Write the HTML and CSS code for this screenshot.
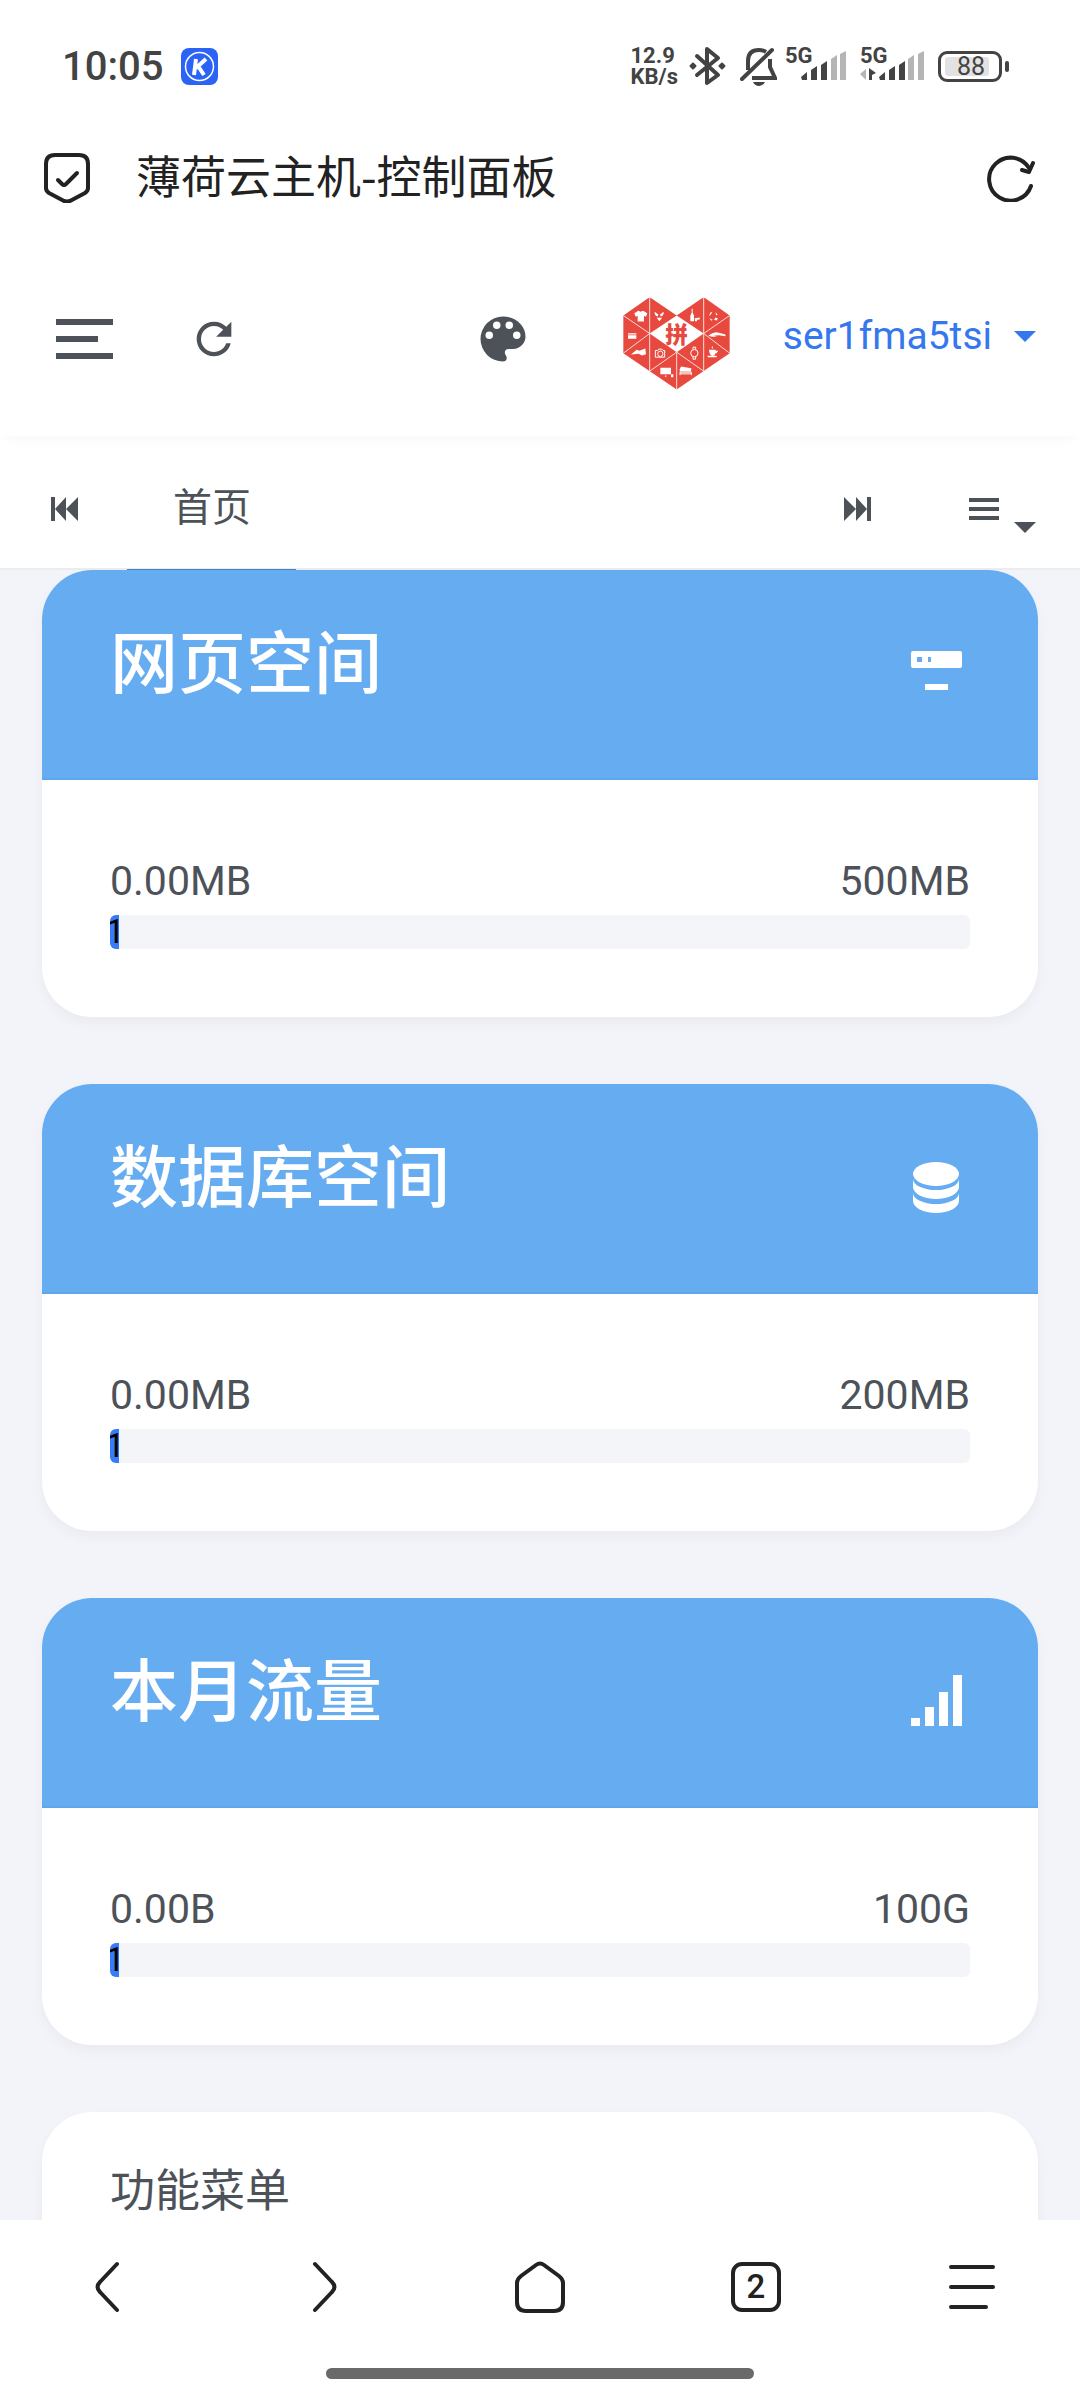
FILE: index.html
```html
<!DOCTYPE html>
<html lang="zh-CN">
<head>
    <meta charset="UTF-8">
    <meta name="viewport" content="width=device-width, initial-scale=1.0">
    <title>薄荷云主机-控制面板</title>
    <link rel="stylesheet" href="styles.css">
</head>
<body>
    <!-- Phone status bar -->
    <div class="status-bar">
        <span class="clock">10:05</span>
        <svg class="app-badge" width="37" height="37" viewBox="0 0 37 37">
            <rect width="37" height="37" rx="8" fill="#2a63f5"/>
            <circle cx="18.500" cy="18.500" r="14" fill="none" stroke="#fff" stroke-width="1.500"/>
            <path d="M15 11L13 27M25 11L15 20M17 18L23 27" fill="none" stroke="#fff" stroke-width="4"/>
        </svg>
        <div class="net-speed">
            <span>12.9</span>
            <span>KB/s</span>
        </div>
        <svg class="bluetooth" width="37" height="40" viewBox="0 0 37 40" fill="none" stroke="#434343" stroke-width="4" stroke-linejoin="round" stroke-linecap="round">
            <path d="M8 10L29 29L18 37V3L29 12L8 29"/>
            <path d="M4 17.500L6.500 20L4 22.500L1.500 20ZM33 17.500L35.500 20L33 22.500L30.500 20Z" fill="#434343" stroke-width="2"/>
        </svg>
        <svg class="bell" width="37" height="40" viewBox="0 0 37 40" fill="none" stroke="#434343" stroke-width="4">
            <path d="M8 24V15Q8 4 19 4Q23 4 26 6"/>
            <path d="M30 13V21L35 32H12"/>
            <path d="M2 33L32 4" stroke-linecap="round"/>
            <path d="M13 36H25Q23 40 19 40Q15 40 13 36Z" fill="#434343" stroke="none"/>
        </svg>
        <div class="signal">
            <span class="net-type">5G</span>
            <svg width="45" height="30" viewBox="0 0 45 30" fill="#434343">
                <path d="M0 26L6 21V29H1ZM10 19L16 15V29H10ZM20 14L26 10V29H20Z"/>
                <path d="M30 8L36 4V29H30ZM39 3L45 0V29H39Z" fill="#b5b5b5"/>
            </svg>
        </div>
        <div class="signal">
            <span class="net-type">5G</span>
            <svg width="64" height="30" viewBox="0 0 64 30" fill="#434343">
                <path d="M6 18V29L0 23Z" fill="#b5b5b5"/>
                <path d="M9 17L16 22L12 24V29H9Z"/>
                <path d="M19 26L25 21V29H20ZM29 19L35 15V29H29ZM39 14L45 10V29H39Z"/>
                <path d="M48 8L54 4V29H48ZM58 3L64 0V29H58Z" fill="#b5b5b5"/>
            </svg>
        </div>
        <div class="battery"><span class="battery-level">88</span></div>
    </div>

    <!-- Browser title bar -->
    <div class="title-bar">
        <svg width="46" height="50" viewBox="0 0 46 50" fill="none" stroke="#222" stroke-width="4" stroke-linecap="round" stroke-linejoin="round">
            <path d="M2 11Q2 2 11 2H35Q44 2 44 11V35Q44 38 41 40L26 48Q23 49 20 48L5 40Q2 38 2 35Z"/>
            <path d="M14 27L18 31Q20 33 22 31L33 20"/>
        </svg>
        <span class="page-title">薄荷云主机-控制面板</span>
        <button class="icon-btn" aria-label="刷新">
            <svg width="48" height="48" viewBox="0 0 48 48" fill="none" stroke="#222" stroke-width="4" stroke-linecap="round" stroke-linejoin="round">
                <path d="M44 32A21.500 21.500 0 1 1 42 14"/>
                <path d="M35 16L42 18L46 9"/>
            </svg>
        </button>
    </div>

    <!-- Panel header -->
    <header class="top-nav">
        <button class="icon-btn nav-toggle" aria-label="菜单">
            <span></span>
            <span></span>
            <span></span>
        </button>
        <button class="icon-btn" aria-label="刷新页面">
            <svg width="52" height="52" viewBox="0 0 24 24" fill="#4d5259">
                <path d="M17.65,6.35C16.2,4.9 14.21,4 12,4A8,8 0 0,0 4,12A8,8 0 0,0 12,20C15.73,20 18.84,17.45 19.73,14H17.65C16.83,16.33 14.61,18 12,18A6,6 0 0,1 6,12A6,6 0 0,1 12,6C13.66,6 15.14,6.69 16.22,7.78L13,11H20V4L17.65,6.35Z"/>
            </svg>
        </button>
        <button class="icon-btn palette" aria-label="主题">
            <svg width="60" height="60" viewBox="0 0 24 24" fill="#4d5259">
                <path d="M17.5,12A1.5,1.5 0 0,1 16,10.5A1.5,1.5 0 0,1 17.5,9A1.5,1.5 0 0,1 19,10.5A1.5,1.5 0 0,1 17.5,12M14.5,8A1.5,1.5 0 0,1 13,6.5A1.5,1.5 0 0,1 14.5,5A1.5,1.5 0 0,1 16,6.5A1.5,1.5 0 0,1 14.5,8M9.5,8A1.5,1.5 0 0,1 8,6.5A1.5,1.5 0 0,1 9.5,5A1.5,1.5 0 0,1 11,6.5A1.5,1.5 0 0,1 9.5,8M6.5,12A1.5,1.5 0 0,1 5,10.5A1.5,1.5 0 0,1 6.5,9A1.5,1.5 0 0,1 8,10.5A1.5,1.5 0 0,1 6.5,12M12,3A9,9 0 0,0 3,12A9,9 0 0,0 12,21A1.5,1.5 0 0,0 13.5,19.5C13.5,19.11 13.35,18.76 13.11,18.5C12.88,18.23 12.73,17.88 12.73,17.5A1.5,1.5 0 0,1 14.23,16H16A5,5 0 0,0 21,11C21,6.58 16.97,3 12,3Z"/>
            </svg>
        </button>
        <a href="#" class="user">
            <svg class="avatar" width="107" height="93" viewBox="78 53 321 278">
                <path d="M79 108L152 57Q158 52 164 57L239 108L314 57Q320 52 326 57L398 108V221L239 330L79 221Z" fill="#e8493f"/>
                <path d="M239 108L320 162L239 218L158 162Z" fill="#fff"/>
                <path d="M158 54V275L239 218L320 275V54M239 218V330M79 108L158 162L79 221M398 108L320 162L398 221" fill="none" stroke="#fbdcd9" stroke-width="3"/>
                <text x="239" y="190" class="avatar-text">拼</text>
                <g fill="#fff">
                    <path d="M112 101L124 94Q131 99 138 94L151 101L147 112L141 109V126H122V109L116 112Z"/>
                    <path d="M173 97L184 105L182 111Q172 109 173 97ZM200 97L189 105L191 111Q201 109 200 97ZM179 115H195L187 125Z"/>
                    <path d="M284 88H287V100L291 108V125H280V108L284 100ZM293 116L308 114V120L300 121V125H294Z"/>
                    <path d="M336 108L341 98L346 97L340 107ZM355 98L362 105L358 108ZM337 116L347 121L343 124ZM351 121L356 114L362 116L360 123Z"/>
                    <path d="M93 161H118V165H93ZM93 167H118V178H93Z"/>
                    <path d="M102 225L119 211L127 214L145 207L147 224L135 228L125 223Z"/>
                    <path d="M190 265H222V284H190ZM222 284H229V293H222ZM204 288H208V292H204Z"/>
                    <path d="M248 270L252 261L283 266L282 276H248Z"/>
                    <path d="M336 211H356V220Q354 229 346 229Q337 228 336 211ZM332 229H359V233H332ZM355 214H364L357 223Z"/>
                    <path d="M334 169Q350 154 366 160L385 165L386 170L365 167L350 169L360 172H345Z"/>
                </g>
                <g fill="none" stroke="#fff" stroke-width="3">
                    <path d="M175 213H182L185 209H195L198 213H203V233H175Z"/>
                    <circle cx="190" cy="223" r="8"/>
                    <circle cx="292" cy="221" r="11"/>
                    <path d="M288 210V203H296V210M288 232V239H296V232M249 287V278H283V287M249 283H283M346 207V201"/>
                </g>
            </svg>
            <span class="user-name">ser1fma5tsi</span>
            <span class="caret"></span>
        </a>
    </header>

    <!-- Tabs -->
    <nav class="tabs">
        <button class="icon-btn" aria-label="向左">
            <svg width="27" height="24" viewBox="0 0 27 24" fill="#4d5259">
                <path d="M0 0H4V24H0ZM15 0V24L4 12ZM27 0V24L15 12Z"/>
            </svg>
        </button>
        <a href="#" class="tab active">首页</a>
        <button class="icon-btn tabs-next" aria-label="向右">
            <svg width="27" height="24" viewBox="0 0 27 24" fill="#4d5259">
                <path d="M23 0H27V24H23ZM0 0V24L12 12ZM12 0V24L23 12Z"/>
            </svg>
        </button>
        <button class="icon-btn tabs-menu" aria-label="标签菜单">
            <svg width="30" height="22" viewBox="0 0 30 22" fill="#4d5259">
                <path d="M0 0H30V4H0ZM0 9H30V13H0ZM0 18H30V22H0Z"/>
            </svg>
            <span class="caret"></span>
        </button>
    </nav>

    <main class="content">
        <section class="card">
            <div class="card-header">
                <h4>网页空间</h4>
                <svg width="68" height="68" viewBox="0 0 68 68" fill="#fff">
                    <path fill-rule="evenodd" d="M11 11H58Q60 11 60 13V26Q60 28 58 28H11Q9 28 9 26V13Q9 11 11 11ZM15 17V22H20V17ZM26 17V22H29V17Z"/>
                    <path d="M23 44H46V50H23Z"/>
                </svg>
            </div>
            <div class="card-body">
                <div class="usage"><span>0.00MB</span><span>500MB</span></div>
                <div class="progress"><div class="progress-bar" style="width: 1%">1%</div></div>
            </div>
        </section>

        <section class="card">
            <div class="card-header">
                <h4>数据库空间</h4>
                <svg width="68" height="68" viewBox="0 0 68 68" fill="#fff">
                    <ellipse cx="34" cy="20" rx="23" ry="12"/>
                    <path d="M11 25A23 11 0 0 0 57 25V33A23 12 0 0 1 11 33Z"/>
                    <path d="M11 39A23 11 0 0 0 57 39V47A23 12 0 0 1 11 47Z"/>
                </svg>
            </div>
            <div class="card-body">
                <div class="usage"><span>0.00MB</span><span>200MB</span></div>
                <div class="progress"><div class="progress-bar" style="width: 1%">1%</div></div>
            </div>
        </section>

        <section class="card">
            <div class="card-header">
                <h4>本月流量</h4>
                <svg width="68" height="68" viewBox="0 0 68 68" fill="#fff">
                    <path d="M9 50H18V58H9ZM23 39H32V58H23ZM37 24H46V58H37ZM51 7H60V58H51Z"/>
                </svg>
            </div>
            <div class="card-body">
                <div class="usage"><span>0.00B</span><span>100G</span></div>
                <div class="progress"><div class="progress-bar" style="width: 1%">1%</div></div>
            </div>
        </section>

        <section class="card menu-card">
            <div class="menu-title">功能菜单</div>
        </section>
    </main>

    <!-- Browser toolbar -->
    <footer class="toolbar">
        <div class="toolbar-buttons">
            <button class="icon-btn" aria-label="后退">
                <svg width="50" height="54" viewBox="0 0 50 54" class="line-icon">
                    <path d="M34 4L17 22Q12 27 17 32L34 50"/>
                </svg>
            </button>
            <button class="icon-btn" aria-label="前进">
                <svg width="50" height="54" viewBox="0 0 50 54" class="line-icon">
                    <path d="M16 4L33 22Q38 27 33 32L16 50"/>
                </svg>
            </button>
            <button class="icon-btn" aria-label="主页">
                <svg width="50" height="54" viewBox="0 0 50 54" class="line-icon">
                    <path d="M21 5Q25 2 29 5L44 16Q48 19 48 23V42Q48 51 39 51H11Q2 51 2 42V23Q2 19 6 16Z"/>
                </svg>
            </button>
            <button class="icon-btn" aria-label="标签页"><span class="tab-count">2</span></button>
            <button class="icon-btn" aria-label="更多">
                <svg width="50" height="54" viewBox="0 0 50 54" class="line-icon">
                    <path d="M4 7H46M4 27H46M4 47H39"/>
                </svg>
            </button>
        </div>
        <div class="home-bar"></div>
    </footer>
</body>
</html>
```
FILE: styles.css
```css
* {
    box-sizing: border-box;
}
body {
    margin: 0;
    height: 100vh;
    display: flex;
    flex-direction: column;
    font-family: Roboto, 'Noto Sans CJK SC', sans-serif;
    font-size: 40px;
    color: #4d5259;
    background-color: #fff;
    overflow: hidden;
}
svg {
    display: block;
    flex-shrink: 0;
}
a {
    color: inherit;
    text-decoration: none;
}
.icon-btn {
    display: flex;
    align-items: center;
    justify-content: center;
    padding: 0;
    border: none;
    background: none;
    color: inherit;
    font: inherit;
    cursor: pointer;
}

/* Status bar */
.status-bar {
    display: flex;
    align-items: center;
    height: 132px;
    padding: 0 78px 0 62px;
    color: #434343;
}
.clock {
    font-weight: 500;
}
.app-badge {
    margin-left: 18px;
}
.net-speed {
    display: flex;
    flex-direction: column;
    margin-left: auto;
    font-size: 22px;
    font-weight: 700;
    line-height: 21px;
}
.bluetooth {
    margin-left: 11px;
}
.bell {
    margin: 0 8px 0 14px;
}
.signal {
    position: relative;
    display: flex;
    justify-content: flex-end;
    min-width: 61px;
    margin-right: 14px;
}
.net-type {
    position: absolute;
    top: -6px;
    left: 0;
    font-size: 22px;
    font-weight: 700;
    line-height: 22px;
}
.battery {
    position: relative;
    width: 64px;
    height: 31px;
    padding: 3px 4px;
    border: 3px solid #434343;
    border-radius: 9px;
}
.battery::after {
    content: "";
    position: absolute;
    top: 7px;
    right: -10px;
    width: 4px;
    height: 11px;
    border-radius: 2px;
    background-color: #434343;
}
.battery-level {
    display: block;
    width: 44px;
    border-radius: 3px;
    background-color: #e2e2e2;
    font-size: 25px;
    line-height: 19px;
    text-align: right;
    padding-right: 4px;
}

/* Title bar */
.title-bar {
    display: flex;
    align-items: center;
    height: 92px;
    padding: 0 45px 0 44px;
    color: #222;
}
.page-title {
    flex: 1;
    padding-bottom: 6px;
    margin-left: 46px;
    font-family: 'Noto Sans CJK SC', sans-serif;
    font-size: 45px;
    line-height: 60px;
}

/* Panel header */
.top-nav {
    position: relative;
    z-index: 1;
    display: flex;
    align-items: center;
    height: 212px;
    padding: 18px 44px 0 56px;
    background-color: #fff;
    box-shadow: 0 10px 12px -6px rgba(0, 0, 0, 0.03);
}
.nav-toggle {
    flex-direction: column;
    align-items: flex-start;
    gap: 11px;
    margin-right: 75px;
}
.nav-toggle span {
    width: 57px;
    height: 6px;
    background-color: #4d5259;
}
.nav-toggle span:nth-child(2) {
    width: 42px;
}
.palette {
    margin-left: auto;
}
.user {
    display: flex;
    align-items: center;
    padding-bottom: 6px;
    margin-left: 90px;
    color: #3577ee;
}
.avatar {
    margin: 14px 53px 0 0;
}
.avatar-text {
    font-family: 'Noto Sans CJK SC', sans-serif;
    font-size: 68px;
    font-weight: 900;
    fill: #e8493f;
    text-anchor: middle;
}
.user-name {
    font-size: 39px;
}
.caret {
    margin-left: 22px;
    border-top: 11px solid;
    border-left: 11px solid transparent;
    border-right: 11px solid transparent;
}

/* Tabs */
.tabs {
    display: flex;
    align-items: center;
    height: 134px;
    padding: 14px 44px 0 51px;
    border-bottom: 2px solid #ebecee;
}
.tab {
    align-self: stretch;
    display: flex;
    align-items: center;
    margin: 0 0 -2px 49px;
    padding: 0 45px 12px 46px;
    font-family: 'Noto Sans CJK SC', sans-serif;
    font-size: 39px;
}
.tab.active {
    border-bottom: 1px solid #4a80c8;
}
.tabs-next {
    margin-left: auto;
}
.tabs-menu {
    margin-left: 98px;
}
.tabs-menu svg {
    align-self: center;
}
.tabs-menu .caret {
    margin: 36px 0 0 15px;
}

/* Content */
.content {
    flex: 1;
    display: flex;
    flex-direction: column;
    gap: 67px;
    min-height: 0;
    padding: 0 42px;
    background-color: #f3f4fa;
    overflow: hidden;
}
.card {
    flex-shrink: 0;
    border-radius: 50px;
    background-color: #fff;
    box-shadow: 0 6px 14px rgba(0, 0, 0, 0.04);
}
.card-header {
    display: flex;
    align-items: center;
    justify-content: space-between;
    padding: 57px 68px;
    border-bottom: 2px solid #62a5eb;
    border-radius: 50px 50px 0 0;
    background-color: #66acf1;
    color: #fff;
}
.card-header h4 {
    margin: 0 0 18px;
    font-size: 68px;
    font-weight: 500;
    line-height: 76px;
}
.card-body {
    padding: 68px;
}
.usage {
    display: flex;
    justify-content: space-between;
    font-size: 41px;
    line-height: 67px;
}
.progress {
    height: 34px;
    border-radius: 6px;
    background-color: #f4f5f8;
    overflow: hidden;
}
.progress-bar {
    height: 34px;
    background-color: #377cf6;
    color: #000;
    font-size: 33px;
    line-height: 34px;
    text-indent: -4px;
    overflow: hidden;
}
.menu-card {
    padding: 46px 68px 68px;
}
.menu-title {
    font-size: 45px;
    line-height: 67px;
}

/* Browser toolbar */
.toolbar {
    height: 180px;
    background-color: #fff;
}
.toolbar-buttons {
    display: grid;
    grid-template-columns: repeat(5, 1fr);
    height: 134px;
}
.line-icon {
    fill: none;
    stroke: #222;
    stroke-width: 4px;
    stroke-linecap: round;
    stroke-linejoin: round;
}
.tab-count {
    width: 50px;
    height: 50px;
    border: 4px solid #222;
    border-radius: 11px;
    color: #222;
    font-size: 33px;
    font-weight: 500;
    line-height: 42px;
}
.home-bar {
    width: 428px;
    height: 11px;
    margin: 14px auto 0;
    border-radius: 6px;
    background-color: #6a6a6a;
}
```
